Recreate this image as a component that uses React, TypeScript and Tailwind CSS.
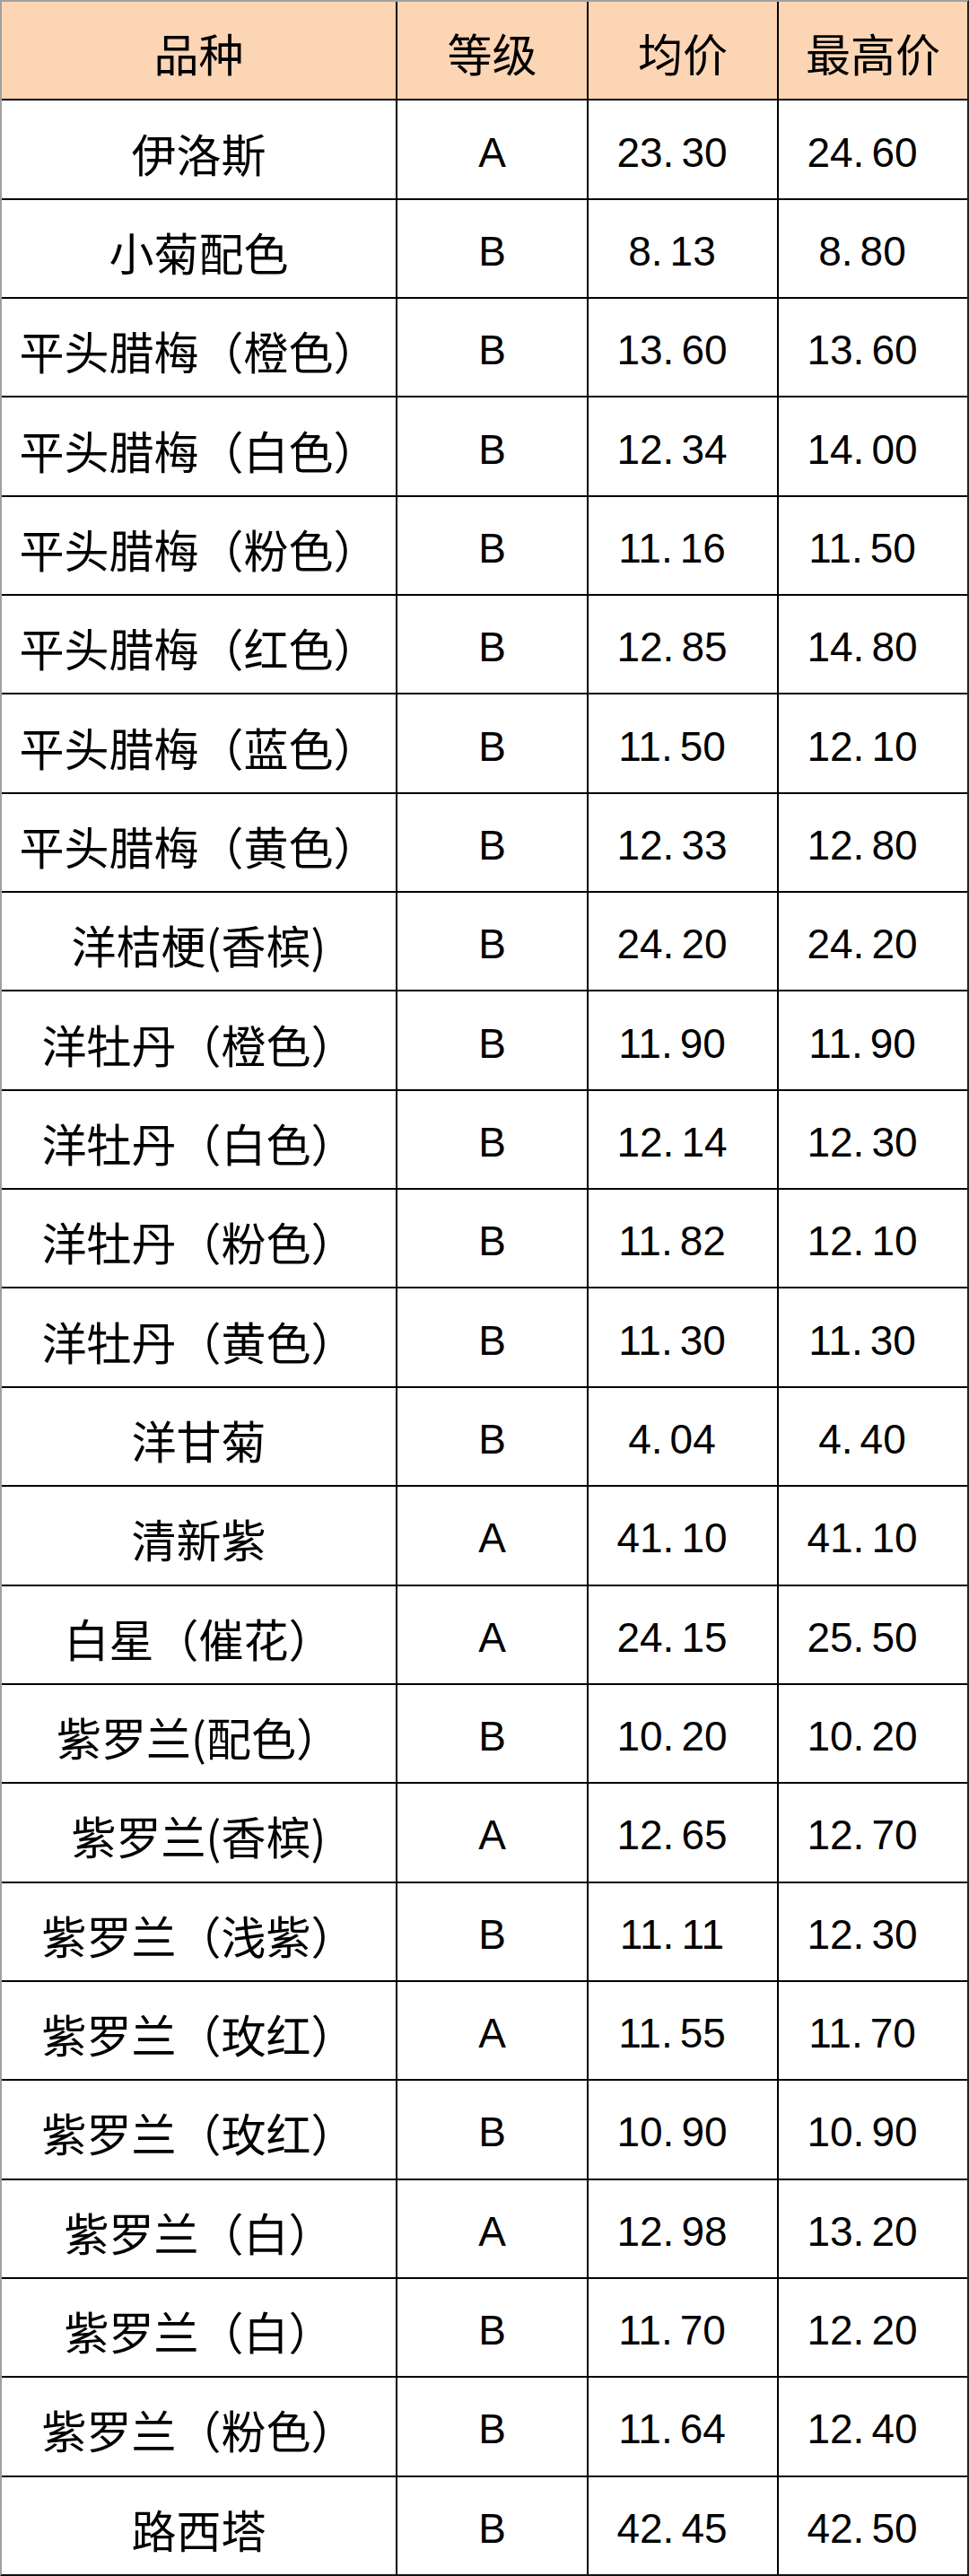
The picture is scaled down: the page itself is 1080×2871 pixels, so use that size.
import * as React from "react";

// price rows, in the order of the sheet
interface PriceRow {
  name: string;
  grade: 'A' | 'B';
  avg: string;
  max: string;
}

const rows: PriceRow[] = [
  { name: '伊洛斯', grade: 'A', avg: '23.30', max: '24.60' },
  { name: '小菊配色', grade: 'B', avg: '8.13', max: '8.80' },
  { name: '平头腊梅（橙色）', grade: 'B', avg: '13.60', max: '13.60' },
  { name: '平头腊梅（白色）', grade: 'B', avg: '12.34', max: '14.00' },
  { name: '平头腊梅（粉色）', grade: 'B', avg: '11.16', max: '11.50' },
  { name: '平头腊梅（红色）', grade: 'B', avg: '12.85', max: '14.80' },
  { name: '平头腊梅（蓝色）', grade: 'B', avg: '11.50', max: '12.10' },
  { name: '平头腊梅（黄色）', grade: 'B', avg: '12.33', max: '12.80' },
  { name: '洋桔梗(香槟)', grade: 'B', avg: '24.20', max: '24.20' },
  { name: '洋牡丹（橙色）', grade: 'B', avg: '11.90', max: '11.90' },
  { name: '洋牡丹（白色）', grade: 'B', avg: '12.14', max: '12.30' },
  { name: '洋牡丹（粉色）', grade: 'B', avg: '11.82', max: '12.10' },
  { name: '洋牡丹（黄色）', grade: 'B', avg: '11.30', max: '11.30' },
  { name: '洋甘菊', grade: 'B', avg: '4.04', max: '4.40' },
  { name: '清新紫', grade: 'A', avg: '41.10', max: '41.10' },
  { name: '白星（催花）', grade: 'A', avg: '24.15', max: '25.50' },
  { name: '紫罗兰(配色）', grade: 'B', avg: '10.20', max: '10.20' },
  { name: '紫罗兰(香槟)', grade: 'A', avg: '12.65', max: '12.70' },
  { name: '紫罗兰（浅紫）', grade: 'B', avg: '11.11', max: '12.30' },
  { name: '紫罗兰（玫红）', grade: 'A', avg: '11.55', max: '11.70' },
  { name: '紫罗兰（玫红）', grade: 'B', avg: '10.90', max: '10.90' },
  { name: '紫罗兰（白）', grade: 'A', avg: '12.98', max: '13.20' },
  { name: '紫罗兰（白）', grade: 'B', avg: '11.70', max: '12.20' },
  { name: '紫罗兰（粉色）', grade: 'B', avg: '11.64', max: '12.40' },
  { name: '路西塔', grade: 'B', avg: '42.45', max: '42.50' },
];

const cjk = "font-['Noto_Sans_CJK_SC',sans-serif] text-[50px] leading-none";
const latin = "font-['Liberation_Sans',Arial,sans-serif] text-[46px] leading-none";

const Price: React.FC<{ value: string }> = ({ value }) => {
  const [whole, frac] = value.split('.');
  return (
    <span className={latin}>
      {whole}
      <span className="mr-[8px]">.</span>
      {frac}
    </span>
  );
};

const Cell: React.FC<{ header?: boolean; className?: string; children: React.ReactNode }> = ({
  header,
  className = '',
  children,
}) => (
  <div
    className={`flex items-center justify-center text-black ${
      header ? 'bg-[#fcd5b4]' : 'bg-white'
    } ${className}`}
  >
    {children}
  </div>
);

export default function App() {
  return (
    <div className="w-[1080px] h-[2871px] bg-black border-t-2 border-l-2 border-t-[#a0a0a0] border-l-[#a0a0a0] border-r-2 border-b-2 border-r-[#222] border-b-[#111]">
      <div className="grid h-full grid-cols-[439px_211px_210px_210px] grid-rows-[repeat(26,minmax(0,1fr))] gap-[2px]">
        {/* Header */}
        <Cell header className={`pt-[4px] ${cjk}`}>品种</Cell>
        <Cell header className={`pt-[4px] ${cjk}`}>等级</Cell>
        <Cell header className={`pt-[4px] ${cjk}`}>均价</Cell>
        <Cell header className={`pt-[4px] ${cjk}`}>最高价</Cell>

        {/* Rows */}
        {rows.map((row, i) => (
          <React.Fragment key={i}>
            <Cell className={`pt-[6px] ${cjk}`}>{row.name}</Cell>
            <Cell className={`pt-[6px] ${latin}`}>{row.grade}</Cell>
            <Cell className="pt-[6px] pr-[24px]">
              <Price value={row.avg} />
            </Cell>
            <Cell className="pt-[6px] pr-[24px]">
              <Price value={row.max} />
            </Cell>
          </React.Fragment>
        ))}
      </div>
    </div>
  );
}
